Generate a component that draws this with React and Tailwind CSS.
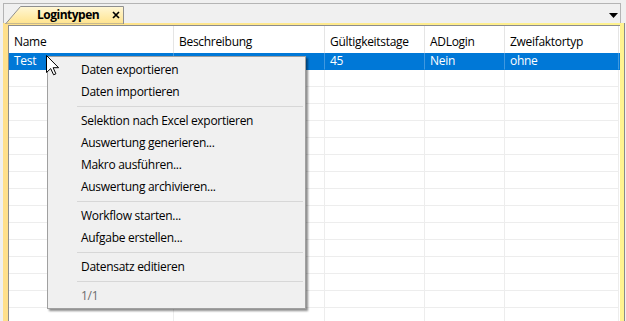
import { Fragment } from 'react'

const COLS = [
  { label: 'Name', w: 'w-[165px]' },
  { label: 'Beschreibung', w: 'w-[151px]' },
  { label: 'Gültigkeitstage', w: 'w-[100px]' },
  { label: 'ADLogin', w: 'w-[80px]' },
  { label: 'Zweifaktortyp', w: 'w-[114px]' },
]

const SELECTED = ['Test', '', '45', 'Nein', 'ohne']

// Kontextmenü, null = Trennlinie
const MENU = [
  'Daten exportieren',
  'Daten importieren',
  null,
  'Selektion nach Excel exportieren',
  'Auswertung generieren...',
  'Makro ausführen...',
  'Auswertung archivieren...',
  null,
  'Workflow starten...',
  'Aufgabe erstellen...',
  null,
  'Datensatz editieren',
  null,
]

function Tab() {
  return (
    <div className="relative w-[120px] h-[18px] mt-[2px] ml-[1px]">
      <svg className="absolute inset-0" width="120" height="18" viewBox="0 0 120 18">
        <defs>
          <linearGradient id="tabfill" x1="0" y1="0" x2="0" y2="1">
            <stop offset="0" stopColor="#fff7d6" />
            <stop offset="1" stopColor="#ffe38c" />
          </linearGradient>
        </defs>
        <polygon points="0.5,18 15.5,0.5 118.5,0.5 118.5,18" fill="url(#tabfill)" stroke="#8f8f8f" strokeWidth="1" />
      </svg>
      <div className="relative flex items-center h-full pl-[32px] pr-[5px]">
        <span className="text-[12px] font-bold text-black leading-none tracking-[-0.5px]">Logintypen</span>
        <svg className="ml-auto" width="8" height="8" viewBox="0 0 8 8">
          <path d="M1 1 L7 7 M7 1 L1 7" stroke="#000" strokeWidth="1.7" />
        </svg>
      </div>
    </div>
  )
}

function Cursor() {
  return (
    <svg className="absolute left-[46px] top-[55px]" width="14" height="21" viewBox="0 0 14 21">
      <path
        d="M0.5 0.5 L0.5 17.5 L4.7 13.6 L7.6 19.8 L9.9 18.8 L7.1 12.7 L12.6 12.7 Z"
        fill="#fff"
        stroke="#000"
        strokeWidth="1"
        strokeLinejoin="miter"
      />
    </svg>
  )
}

function ContextMenu() {
  return (
    <div className="absolute left-[47px] top-[56px] w-[259px] bg-[#f0f0f0] border border-[#a0a0a0] shadow-[2px_2px_2px_rgba(0,0,0,0.45)] pt-[2px] pb-[1px] text-[12px] text-black">
      {MENU.map((item, i) =>
        item === null ? (
          <div key={i} className="h-[7px] pt-[3px] pl-[29px] pr-[2px]">
            <div className="h-px bg-[#d7d7d7]" />
          </div>
        ) : (
          <div key={i} className="h-[22px] flex items-center pl-[33px]">
            {item}
          </div>
        )
      )}
      <div className="h-[22px] flex items-center pl-[33px] text-[#6d6d6d]">1/1</div>
    </div>
  )
}

export default function App() {
  const rows = Array.from({ length: 16 })
  return (
    <div
      className="relative w-[626px] h-[321px] overflow-hidden bg-[#f0f0f0] tracking-[-0.3px]"
      style={{ fontFamily: '"Open Sans", "Noto Sans", sans-serif' }}
    >
      <div className="pt-[3px] pl-[3px] pr-[5px]">
        {/* Reiterleiste */}
        <div className="h-[20px] border-t border-l border-r border-[#b4b4b4] flex items-start justify-between">
          <Tab />
          <svg className="mt-[9px] mr-[2px]" width="9" height="5" viewBox="0 0 9 5">
            <polygon points="0,0 9,0 4.5,5" fill="#000" />
          </svg>
        </div>
      </div>

      {/* gelber Rahmen */}
      <div className="ml-[3px] w-[622px] h-[400px] bg-gradient-to-r from-[#ffe08b] to-[#fff38f] pt-[2px] pl-[5px] pr-[4px] border-r border-[#8a8a8a]">
        <div className="bg-white border-t border-l border-[#8c8c8c] h-full text-[12px]">
          {/* Kopfzeile */}
          <div className="flex h-[27px]">
            {COLS.map((c) => (
              <div key={c.label} className={`${c.w} shrink-0 border-r border-[#e5e5e5] pl-[5px] pt-[4px] flex items-center text-black`}>
                {c.label}
              </div>
            ))}
          </div>
          {rows.map((_, r) => (
            <div key={r} className={`flex h-[17px] ${r === 0 ? 'bg-[#0078d7] text-white' : ''}`}>
              {COLS.map((c, ci) => (
                <Fragment key={c.label}>
                  <div
                    className={`${c.w} shrink-0 border-r border-b pl-[5px] flex items-center leading-none ${
                      r === 0 ? 'border-r-[#3f98e0] border-b-[#0078d7]' : 'border-[#ededed]'
                    }`}
                  >
                    {r === 0 ? SELECTED[ci] : ''}
                  </div>
                </Fragment>
              ))}
            </div>
          ))}
        </div>
      </div>

      <ContextMenu />
      <Cursor />
    </div>
  )
}
